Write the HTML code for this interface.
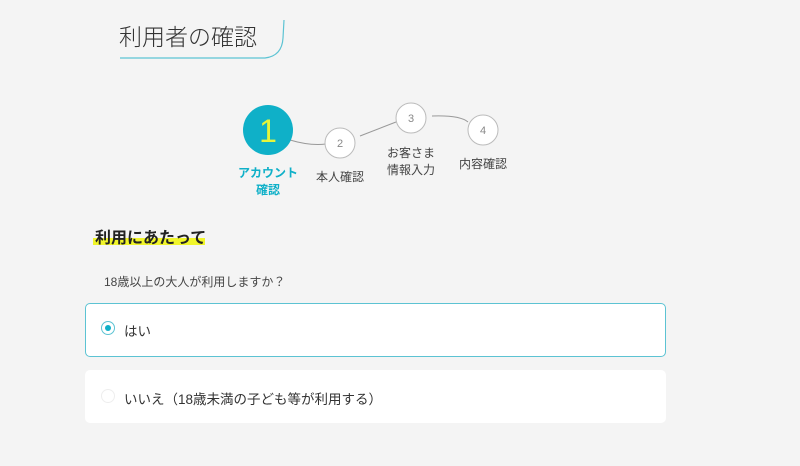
<!DOCTYPE html>
<html><head><meta charset="utf-8"><style>
body{margin:0;width:800px;height:466px;background:#f4f4f4;font-family:"Liberation Sans","Noto Sans CJK JP",sans-serif;position:relative;overflow:hidden;color:#333}
.a{position:absolute;white-space:nowrap}
.lbl{font-size:12px;color:#444;text-align:center;line-height:17px;transform:translateX(-50%)}
.box{position:absolute;left:85px;width:581px;background:#fff;border-radius:5px;box-sizing:border-box}
</style></head><body>
<div class="a" style="left:119px;top:18px;font-size:23px;font-weight:300;color:#333">利用者の確認</div>
<svg class="a" style="left:0;top:0" width="800" height="466">
<path d="M120 58 L265 58 Q282 56 283 38 L284 20" fill="none" stroke="#5cc3d3" stroke-width="1.2"/>
<path d="M290 140 Q310 146 326 144" fill="none" stroke="#999" stroke-width="1"/>
<path d="M360 136 L396 122" fill="none" stroke="#999" stroke-width="1"/>
<path d="M432 116 Q460 115 468 122" fill="none" stroke="#999" stroke-width="1"/>
<circle cx="268" cy="130" r="25" fill="#0fb0c8"/>
<text x="268" y="142" font-size="32" font-weight="300" fill="#e6f53a" text-anchor="middle" font-family="Liberation Sans">1</text>
<circle cx="340" cy="143" r="15" fill="#fff" stroke="#bbb"/>
<text x="340" y="147" font-size="11" fill="#888" text-anchor="middle">2</text>
<circle cx="411" cy="118" r="15" fill="#fff" stroke="#bbb"/>
<text x="411" y="122" font-size="11" fill="#888" text-anchor="middle">3</text>
<circle cx="483" cy="130" r="15" fill="#fff" stroke="#bbb"/>
<text x="483" y="134" font-size="11" fill="#888" text-anchor="middle">4</text>
</svg>
<div class="a lbl" style="left:268px;top:165px;color:#0fb0c8;font-weight:bold">アカウント<br>確認</div>
<div class="a lbl" style="left:340px;top:169px">本人確認</div>
<div class="a lbl" style="left:411px;top:145px">お客さま<br>情報入力</div>
<div class="a lbl" style="left:483px;top:156px">内容確認</div>
<div class="a" style="left:93px;top:238px;width:112px;height:7px;background:#f0f52a"></div>
<div class="a" style="left:95px;top:224px;font-size:16px;font-weight:bold;color:#222">利用にあたって</div>
<div class="a" style="left:104px;top:273px;font-size:12px;color:#444">18歳以上の大人が利用しますか？</div>
<div class="box" style="top:303px;height:54px;border:1px solid #5cc3d3"></div>
<div class="a" style="left:101px;top:321px;width:14px;height:14px;border:1px solid #5cc3d3;border-radius:50%;box-sizing:border-box;background:#fff"><div style="margin:3px;width:6px;height:6px;border-radius:50%;background:#0fb0c8"></div></div>
<div class="a" style="left:124px;top:320px;font-size:13.5px;color:#333">はい</div>
<div class="box" style="top:370px;height:53px"></div>
<div class="a" style="left:101px;top:389px;width:14px;height:14px;border:1px solid #eee;border-radius:50%;box-sizing:border-box"></div>
<div class="a" style="left:124px;top:388px;font-size:13.5px;color:#333">いいえ（18歳未満の子ども等が利用する）</div>
</body></html>
